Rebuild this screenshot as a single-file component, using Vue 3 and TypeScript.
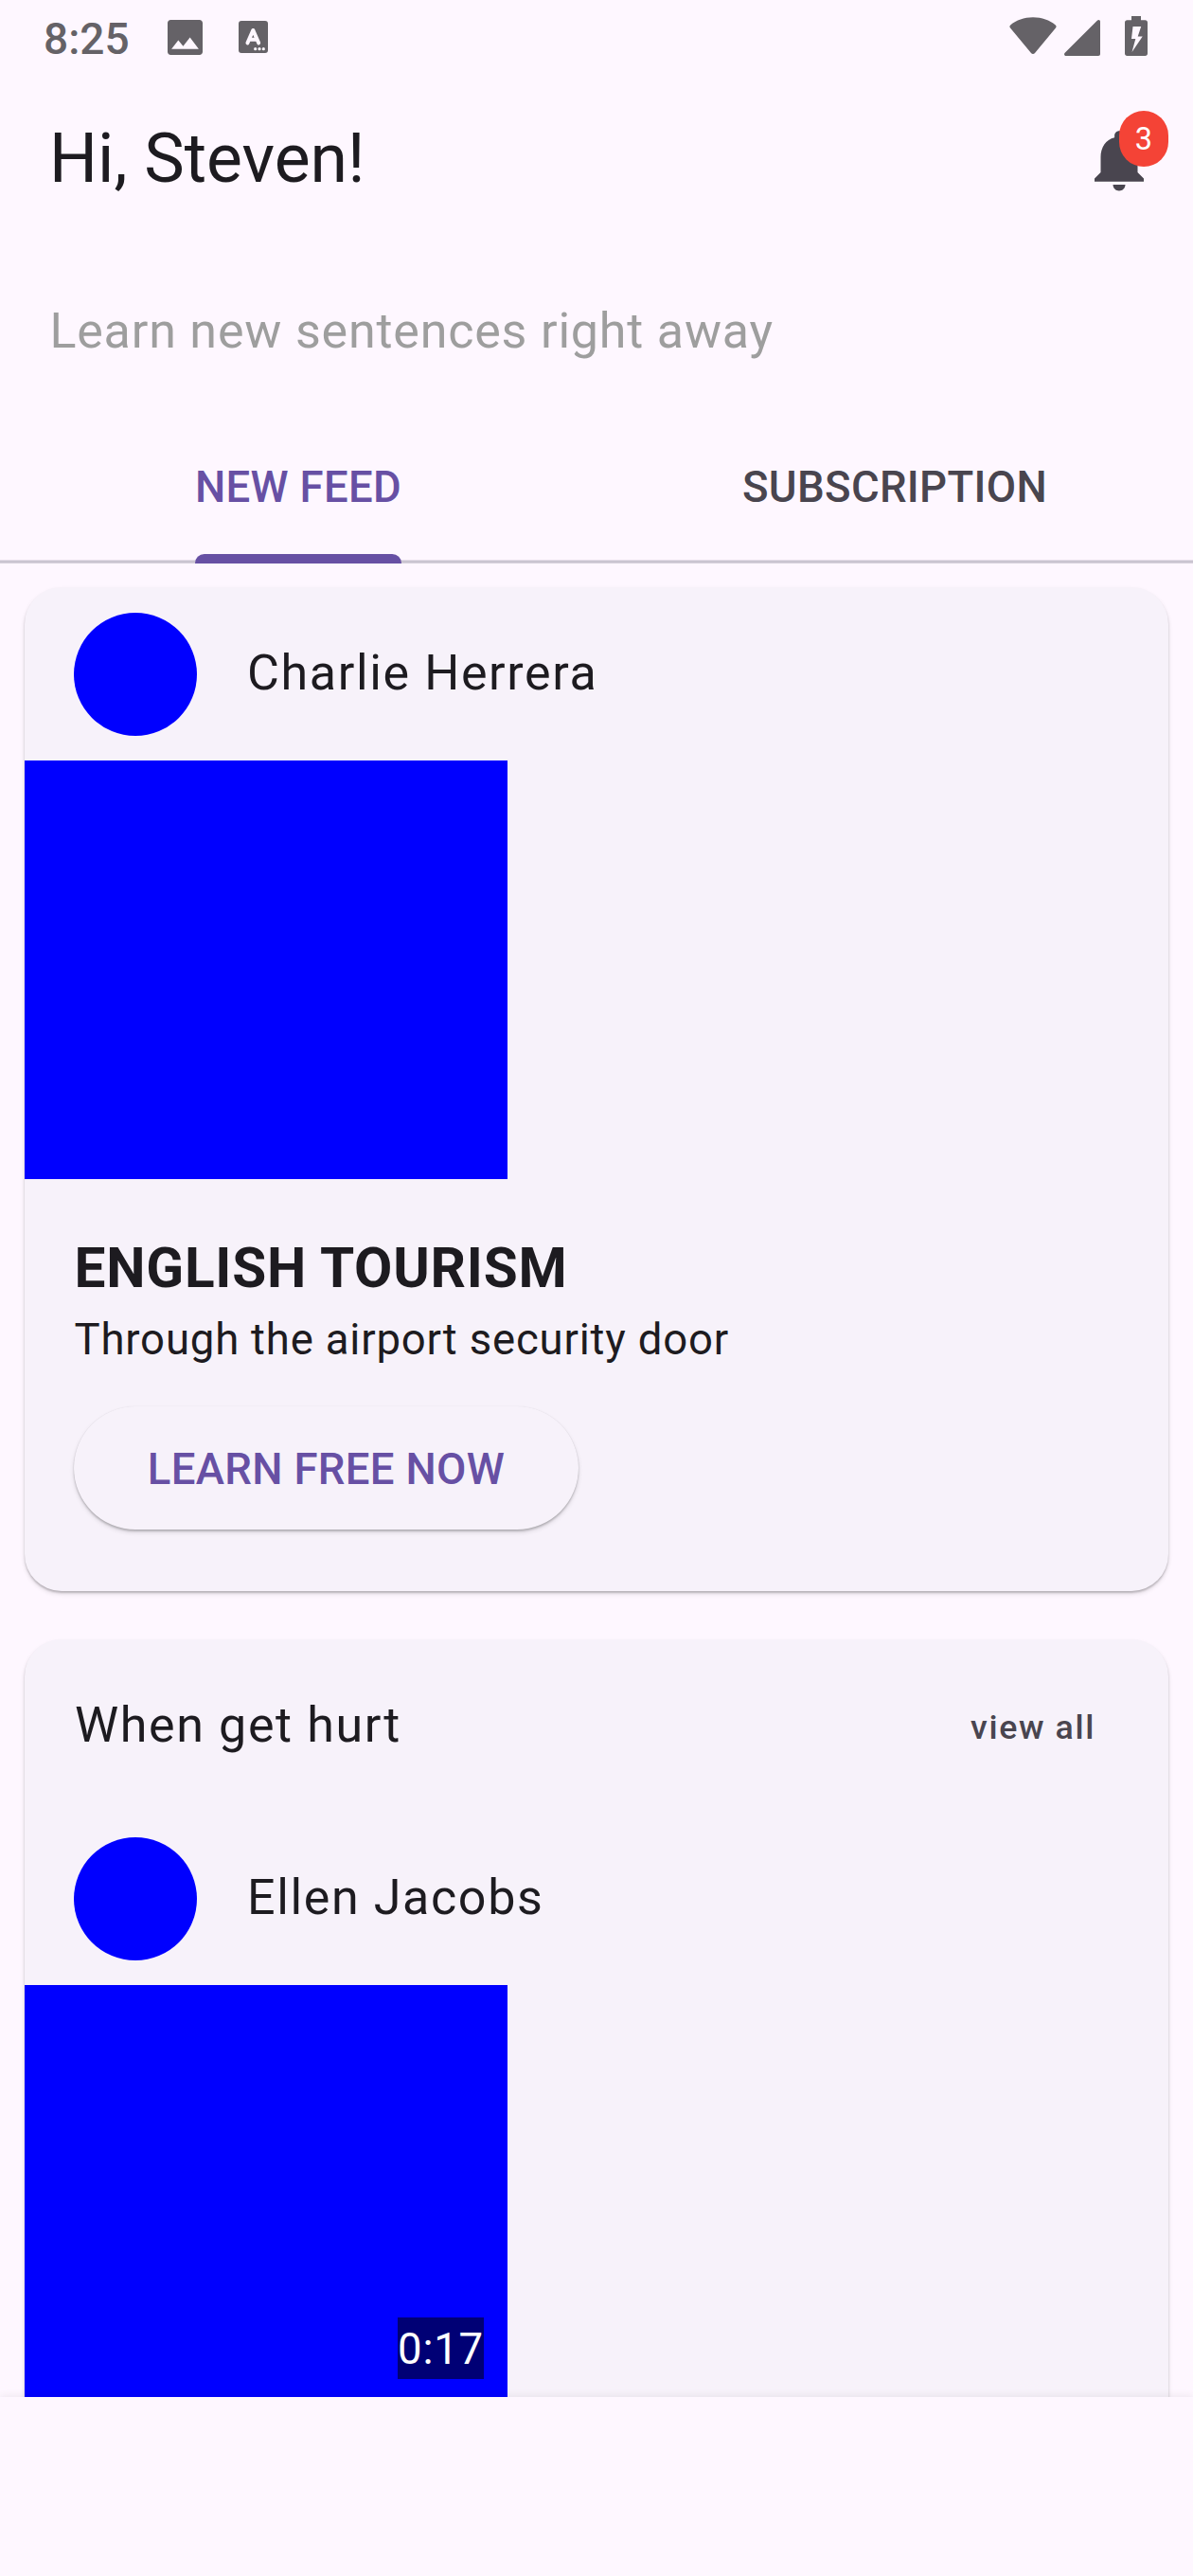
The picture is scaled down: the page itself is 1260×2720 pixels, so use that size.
<script setup lang="ts">
import { ref } from 'vue'

interface Post {
  author: string
  heading?: string
  title?: string
  text?: string
  duration?: string
}

const tabs = ['NEW FEED', 'SUBSCRIPTION']
const active = ref(0)
const notifications = ref(3)

const posts: Post[] = [
  { author: 'Charlie Herrera', title: 'ENGLISH TOURISM', text: 'Through the airport security door' },
  { author: 'Ellen Jacobs', heading: 'When get hurt', duration: '0:17' },
]
</script>

<template>
  <div class="screen">
    <div class="status">
      <span class="clock">8:25</span>
      <svg class="s-image" viewBox="3 3 18 18"><path d="M21 19V4.600c0-.9-.7-1.600-1.600-1.600H4.600C3.700 3 3 3.700 3 4.600v14.800c0 .9.7 1.600 1.600 1.600h14.800c.9 0 1.600-.7 1.600-1.600zM8.500 13.500l2.500 3.010L14.500 12l4.500 6H5l3.500-4.500z" /></svg>
      <svg class="s-a" viewBox="0 0 31 34">
        <rect width="31" height="34" rx="3" />
        <path d="M9.400 23.400L15.300 9.900L21.200 23.400M11.500 19.800H19" fill="none" stroke="#fef7ff" stroke-width="3.900" stroke-linejoin="round" stroke-linecap="round" />
        <g fill="#fef7ff">
          <circle cx="17.700" cy="29.700" r="1.600" />
          <circle cx="22" cy="29.700" r="1.600" />
          <circle cx="26.300" cy="29.700" r="1.600" />
        </g>
      </svg>
      <span class="gap"></span>
      <svg class="s-wifi" viewBox="0 0 50 40"><path d="M1.200 8.500C7.500 3.300 15.500.3 25 .3s17.500 3 23.800 8.200c1 .8 1 1.900.2 2.900L27 38c-1.100 1.400-2.900 1.400-4 0L1 11.400c-.8-1-.8-2.100.2-2.900z" /></svg>
      <svg class="s-cell" viewBox="0 0 38 38"><path d="M34.800.8C36.300-.7 38 .1 38 1.800V36c0 1.300-.7 2-2 2H2c-1.900 0-2.600-2-1.300-3.300z" /></svg>
      <svg class="s-batt" viewBox="0 0 24 42"><path fill-rule="evenodd" d="M7 0h10v4.300h4.500C23 4.300 24 5.300 24 6.800v32.700c0 1.500-1 2.500-2.500 2.500h-19C1 42 0 41 0 39.500V6.800c0-1.500 1-2.500 2.500-2.500H7zM8.500 11L7 24h4.300L7.500 38L18.700 21.500h-5L17.200 11z" /></svg>
    </div>

    <header class="top">
      <h1>Hi, Steven!</h1>
      <div class="bell">
        <svg viewBox="0 0 24 24"><path d="M12 22c1.100 0 2-.9 2-2h-4c0 1.100.89 2 2 2zm6-6v-5c0-3.070-1.640-5.640-4.500-6.320V4c0-.83-.67-1.500-1.500-1.500s-1.500.67-1.500 1.500v.68C7.630 5.360 6 7.920 6 11v5l-2 2v1h16v-1l-2-2z" /></svg>
        <span class="badge">{{ notifications }}</span>
      </div>
    </header>
    <p class="lead">Learn new sentences right away</p>

    <nav class="tabs">
      <button v-for="(t, i) in tabs" :key="t" class="tab" :class="{ on: i === active }" @click="active = i">
        <span>{{ t }}</span>
      </button>
    </nav>

    <main class="feed">
      <article v-for="p in posts" :key="p.author" class="card">
        <div v-if="p.heading" class="heading">
          <h2>{{ p.heading }}</h2>
          <a>view all</a>
        </div>
        <div class="author">
          <i class="avatar"></i>
          <span>{{ p.author }}</span>
        </div>
        <div class="picture">
          <span v-if="p.duration" class="duration">{{ p.duration }}</span>
        </div>
        <div class="body">
          <template v-if="p.title">
            <h3>{{ p.title }}</h3>
            <p>{{ p.text }}</p>
            <button class="learn">LEARN FREE NOW</button>
          </template>
        </div>
      </article>
    </main>

    <footer class="bottom"></footer>
  </div>
</template>

<style>
body {
  background: #fef7ff;
}
</style>

<style scoped>
.screen {
  display: flex;
  flex-direction: column;
  width: 1260px;
  height: 2720px;
  overflow: hidden;
  background: #fef7ff;
  color: #1d1b20;
  font-family: Roboto, sans-serif;
}
h1, h2, h3, p {
  margin: 0;
  font-weight: 400;
}
button {
  border: 0;
  padding: 0;
  background: none;
  font: inherit;
}
svg {
  display: block;
}
.status {
  display: flex;
  align-items: flex-start;
  height: 81px;
  padding: 0 47px 0 46px;
  fill: #656267;
  color: #656267;
  flex: none;
}
.clock {
  width: 130.500px;
  font-size: 46px;
  font-weight: 500;
  line-height: 82px;
}
.s-image { width: 37px; height: 37px; margin-top: 20.500px; }
.s-a { width: 31px; height: 34px; margin: 22px 0 0 38px; }
.gap { flex: 1; }
.s-wifi { width: 50px; height: 40px; margin: 18px 8px 0 0; }
.s-cell { width: 38px; height: 38px; margin: 21px 26px 0 0; }
.s-batt { width: 24px; height: 42px; margin: 17px 1px 0 0; }

.top {
  display: flex;
  justify-content: space-between;
  height: 182px;
  flex: none;
  padding: 0 39px 0 52px;
}
h1 {
  font-size: 71.500px;
  line-height: 84px;
  padding-top: 45px;
}
.bell {
  position: relative;
  width: 78px;
  height: 78px;
  margin-top: 49px;
}
.bell svg {
  width: 78px;
  height: 78px;
  fill: #49454f;
}
.badge {
  position: absolute;
  left: 39px;
  top: -13px;
  width: 52px;
  height: 58.500px;
  border-radius: 26px;
  background: #f44336;
  color: #fff;
  font-size: 32.500px;
  line-height: 61px;
  text-align: center;
}
.lead {
  height: 183px;
  flex: none;
  padding: 48px 52.400px 0;
  box-sizing: border-box;
  font-size: 52px;
  line-height: 78px;
  letter-spacing: 0.8125px;
  color: #9e9e9e;
}
.tabs {
  display: flex;
  height: 149px;
  flex: none;
  background: linear-gradient(#e4dde8 1px, #cac4d0 1px, #cac4d0 3px, #d7d1dc 3px) 0 145px / 100% 4px no-repeat;
}
.tab {
  flex: 1;
  display: flex;
  justify-content: center;
  color: #49454f;
  font-size: 45.500px;
  font-weight: 500;
  letter-spacing: 0.325px;
  line-height: 137px;
}
.tab span {
  position: relative;
  height: 149px;
}
.tab.on {
  color: #6750a4;
}
.tab.on span::after {
  content: '';
  position: absolute;
  left: 0;
  right: 0;
  bottom: 0;
  height: 10px;
  border-radius: 9.750px 9.750px 0 0;
  background: #6750a4;
}
.feed {
  display: flex;
  flex-direction: column;
  gap: 51px;
  flex: none;
  height: 1936px;
  box-sizing: border-box;
  padding: 25px 26px 0;
  overflow: hidden;
}
.card {
  flex: none;
  box-sizing: border-box;
  border-radius: 39px;
  background: #f7f2fa;
  box-shadow: 0 2px 2px rgba(0, 0, 0, 0.190), 0 3px 5px rgba(0, 0, 0, 0.120);
}
.heading {
  display: flex;
  justify-content: space-between;
  height: 182px;
  padding: 0 77px 0 53px;
}
h2 {
  font-size: 52px;
  line-height: 78px;
  letter-spacing: 1.625px;
  padding-top: 52px;
}
.heading a {
  padding-top: 67px;
  font-size: 35.750px;
  font-weight: 500;
  line-height: 52px;
  letter-spacing: 1.625px;
  color: #49454f;
}
.author {
  display: flex;
  align-items: center;
  gap: 53px;
  height: 183px;
  padding-left: 52px;
  font-size: 52px;
  letter-spacing: 1.625px;
}
.author span {
  line-height: 78px;
  padding-bottom: 2px;
}
.avatar {
  width: 130px;
  height: 130px;
  border-radius: 50%;
  background: #00f;
}
.picture {
  position: relative;
  width: 510px;
  height: 442px;
  background: #00f;
}
.duration {
  position: absolute;
  right: 25px;
  bottom: 26px;
  height: 65px;
  background: rgba(0, 0, 0, 0.540);
  color: #fff;
  font-size: 45.500px;
  line-height: 67px;
  letter-spacing: 0.8125px;
}
.body {
  display: flex;
  flex-direction: column;
  align-items: flex-start;
  height: 435px;
  box-sizing: border-box;
  padding: 52px 52px 0;
}
h3 {
  padding-left: 0.500px;
  font-size: 58.500px;
  font-weight: 700;
  line-height: 84px;
  letter-spacing: 0.780px;
}
.body p {
  padding: 1px 0 0 0.500px;
  font-size: 45.500px;
  line-height: 65px;
  letter-spacing: 0.8125px;
}
.learn {
  width: 533px;
  height: 130px;
  margin-top: 38px;
  padding-top: 2px;
  border-radius: 65px;
  background: #f7f2fa;
  color: #6750a4;
  font-size: 45.500px;
  font-weight: 500;
  letter-spacing: 0.325px;
  box-shadow: 0 0 1px rgba(0, 0, 0, 0.100), 0 2px 2px rgba(0, 0, 0, 0.180), 0 3px 5px rgba(0, 0, 0, 0.120);
}
.bottom {
  position: relative;
  flex: 1;
  background: #fef7ff;
  box-shadow: 0 -1px 8px rgba(0, 0, 0, 0.070);
}
</style>
